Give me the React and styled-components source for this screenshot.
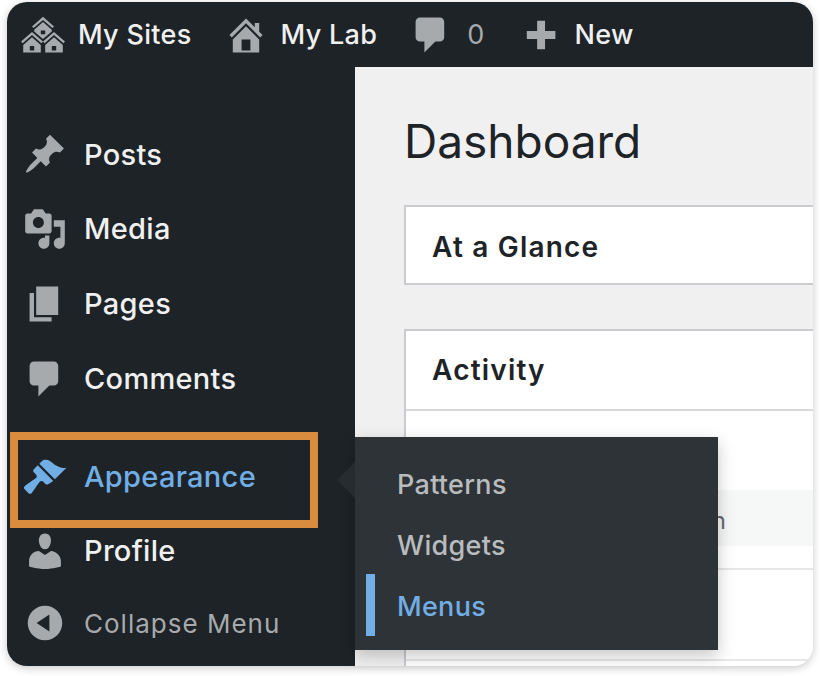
import React from 'react'
import styled, { createGlobalStyle } from 'styled-components'

const Global = createGlobalStyle`
  html, body { margin: 0; padding: 0; background: #fff; }
  body { font-family: Inter, "Liberation Sans", sans-serif; }
`

const Page = styled.div`
  width: 820px;
  height: 676px;
  padding: 2px 7px 10px 7px;
  box-sizing: border-box;
  overflow: hidden;
`

const Frame = styled.div`
  position: relative;
  width: 806px;
  height: 664px;
  border-radius: 20px;
  box-shadow: 0 2px 8px rgba(0, 0, 0, 0.22);
`

const Clip = styled.div`
  width: 100%;
  height: 100%;
  display: flex;
  flex-direction: column;
  border-radius: 20px;
  overflow: hidden;
  background: #f0f0f1;
`

const TopBar = styled.header`
  flex: none;
  height: 65px;
  display: flex;
  align-items: center;
  padding-left: 14px;
  background: #1d2327;
`

const TopItem = styled.div`
  display: flex;
  align-items: center;
  gap: ${(p) => p.$gap}px;
  margin-right: ${(p) => p.$after || 0}px;
  font-size: 27px;
  letter-spacing: 0.3px;
  font-weight: ${(p) => (p.$muted ? 400 : 500)};
  color: ${(p) => (p.$muted ? '#a7aaad' : '#f0f0f1')};
`

const Glyph = styled.svg`
  flex: none;
  display: block;
  width: 44px;
  height: 44px;
  fill: ${(p) => p.$color || '#a7aaad'};
`

const Body = styled.div`
  flex: 1;
  display: flex;
  min-height: 0;
`

const Sidebar = styled.nav`
  flex: none;
  width: 348px;
  padding-top: 50px;
  box-sizing: border-box;
  background: #1d2327;
`

const MenuItem = styled.div`
  position: relative;
  height: ${(p) => p.$height}px;
  margin-top: ${(p) => p.$top || 0}px;
  display: flex;
  align-items: center;
  gap: 17px;
  padding-left: 16px;
  font-size: 29px;
  font-weight: 500;
  letter-spacing: 0.3px;
  color: #f0f0f1;
`

const ActiveItem = styled(MenuItem)`
  color: #72aee6;
`

const CollapseItem = styled(MenuItem)`
  font-size: 26px;
  font-weight: 400;
  letter-spacing: 1px;
  color: #a7aaad;
`

const Highlight = styled.div`
  position: absolute;
  left: 3px;
  top: -8px;
  width: 308px;
  height: 96px;
  box-sizing: border-box;
  border: 8px solid #d98c3e;
`

const Content = styled.main`
  flex: 1;
  min-width: 0;
  padding: 45px 0 0 49px;
  overflow: hidden;
`

const Title = styled.h1`
  margin: 0 0 34px;
  font-size: 46px;
  line-height: 59px;
  font-weight: 400;
  color: #1d2327;
  white-space: nowrap;
`

const Card = styled.section`
  width: 500px;
  margin-bottom: ${(p) => p.$after || 0}px;
  background: #fff;
  border: 2px solid #c9cbce;
  box-sizing: border-box;
`

const CardHead = styled.h2`
  margin: 0;
  height: ${(p) => p.$height}px;
  padding: ${(p) => p.$nudge || 0}px 0 0 26px;
  box-sizing: border-box;
  display: flex;
  align-items: center;
  font-size: 28px;
  font-weight: 600;
  letter-spacing: 1.2px;
  color: #1d2327;
`

const CardBody = styled.div`
  border-top: 2px solid #d8d9db;
  padding-top: 79px;
  height: 260px;
`

const GrayRow = styled.div`
  height: 56px;
  box-sizing: border-box;
  display: flex;
  align-items: center;
  justify-content: flex-end;
  padding: 5px 176px 0 0;
  background: #f6f7f7;
  font-size: 24px;
  color: #646970;
  white-space: nowrap;
`

const Rule = styled.div`
  margin-top: ${(p) => p.$top}px;
  height: 2px;
  background: #e6e7e8;
`

const Flyout = styled.div`
  position: absolute;
  left: 348px;
  top: 435px;
  width: 363px;
  height: 213px;
  padding: 17px 0 0 42px;
  box-sizing: border-box;
  background: #2e3337;
  box-shadow: 0 6px 16px rgba(0, 0, 0, 0.22);

  &::before {
    content: '';
    position: absolute;
    left: -18px;
    top: 25px;
    border: 18px solid transparent;
    border-left: 0;
    border-right-color: #272c30;
  }
`

const FlyoutLink = styled.div`
  position: relative;
  height: 61px;
  display: flex;
  align-items: center;
  font-size: 27px;
  font-weight: 500;
  letter-spacing: 0.3px;
  color: ${(p) => (p.$active ? '#72aee6' : '#b9bcbf')};

  ${(p) =>
    p.$active &&
    `&::before {
      content: '';
      position: absolute;
      left: -31px;
      top: -2px;
      width: 9px;
      height: 62px;
      background: #72aee6;
    }`}
`

const icons = {
  multisite:
    'M14.27 6.87L10 3.14 5.73 6.87 5 6.14l5-4.38 5 4.38zM14 8.42l-4.05 3.43L6 8.38v-.74l4-3.5 4 3.5v.78zM11 9.7V8H9v1.7h2zm-1.73 4.03L5 10 .73 13.73 0 13l5-4.38L10 13zm10 0L15 10l-4.27 3.73L10 13l5-4.38L20 13zM5 11l4 3.5V18H1v-3.5zm10 0l4 3.5V18h-8v-3.5zM6 17v-2H4v2h2zm10 0v-2h-2v2h2z',
  home: 'M16 8.5l1.53 1.53-1.06 1.06L10 4.62l-6.47 6.47-1.06-1.06L10 2.5l4 4v-2h2v4zm-6-2.46l6 5.99V18H4v-5.97zM12 17v-5H8v5h4z',
  comment:
    'M5 2h9c1.1 0 2 .9 2 2v7c0 1.1-.9 2-2 2h-2l-5 5v-5H5c-1.1 0-2-.9-2-2V4c0-1.1.9-2 2-2z',
  plus: 'M17 8.2v3.6h-4.7v4.7H8.7v-4.7H4V8.2h4.7V3.5h3.6v4.7z',
  post: 'M10.44 3.02l1.82-1.82 6.36 6.35-1.83 1.82c-1.05-.68-2.48-.57-3.41.36l-.75.75c-.92.93-1.04 2.35-.35 3.41l-1.83 1.82-2.41-2.41-2.8 2.79c-.42.42-3.38 2.71-3.8 2.29s1.86-3.39 2.28-3.81l2.79-2.79L4.1 9.36l1.83-1.82c1.05.69 2.48.57 3.4-.36l.75-.75c.93-.92 1.05-2.35.36-3.41z',
  media:
    'M13 11V4c0-.55-.45-1-1-1h-1.67L9 1H5L3.67 3H2c-.55 0-1 .45-1 1v7c0 .55.45 1 1 1h10c.55 0 1-.45 1-1zM7 4.5c1.38 0 2.5 1.12 2.5 2.5S8.38 9.5 7 9.5 4.5 8.38 4.5 7 5.62 4.5 7 4.5zM14 6h5v10.5c0 1.38-1.12 2.5-2.5 2.5S14 17.88 14 16.5s1.12-2.5 2.5-2.5c.17 0 .34.02.5.05V9h-3V6zm-4 8.05V13h2v3.5c0 1.38-1.12 2.5-2.5 2.5S7 17.88 7 16.5 8.12 14 9.5 14c.17 0 .34.02.5.05z',
  page: 'M6 15V2h10v13H6zm-1 1h8v2H3V5h2v11z',
  appearance:
    'M14.48 11.06L7.41 3.99l1.5-1.5c.5-.56 2.3-.47 3.51.32 1.21.8 1.43 1.28 2.91 2.1 1.18.64 2.45 1.26 4.45.85zm-.71.71L6.7 4.7 4.93 6.47c-.39.39-.39 1.02 0 1.41l1.06 1.06c.39.39.39 1.03 0 1.42-.6.6-4.63 3.18-5.24 3.79-.39.39-.39 1.02 0 1.41l1.77 1.77c.39.39 1.02.39 1.41 0 .61-.61 3.19-4.64 3.79-5.24.39-.39 1.03-.39 1.42 0l1.06 1.06c.39.39 1.02.39 1.41 0z',
  users:
    'M10 9.25c-2.27 0-2.73-3.44-2.73-3.44C7 4.02 7.82 2 9.97 2c2.16 0 2.98 2.02 2.71 3.81 0 0-.41 3.44-2.68 3.44zm0 2.57L12.72 10c2.39 0 4.52 2.33 4.52 4.53v2.49s-3.65 1.13-7.24 1.13c-3.65 0-7.24-1.13-7.24-1.13v-2.49c0-2.25 1.94-4.48 4.47-4.48z',
  collapse:
    'M10 2.16c4.33 0 7.84 3.51 7.84 7.84s-3.51 7.84-7.84 7.84S2.16 14.33 2.16 10 5.71 2.16 10 2.16zm2 11.72V6.12L6.18 9.97z',
}

const Icon = ({ name, color }) => (
  <Glyph viewBox="0 0 20 20" $color={color}>
    <path d={icons[name]} fillRule="evenodd" />
  </Glyph>
)

const menu = [
  { label: 'Posts', icon: 'post', height: 74 },
  { label: 'Media', icon: 'media', height: 75 },
  { label: 'Pages', icon: 'page', height: 75 },
  { label: 'Comments', icon: 'comment', height: 75 },
]

const App = () => {
  return (
    <Page>
      <Global />
      <Frame>
        <Clip>
          <TopBar>
            <TopItem $gap={13} $after={32}>
              <Icon name="multisite" />
              My Sites
            </TopItem>
            <TopItem $gap={13} $after={32}>
              <Icon name="home" />
              My Lab
            </TopItem>
            <TopItem $gap={14} $after={33} $muted>
              <Icon name="comment" />0
            </TopItem>
            <TopItem $gap={13}>
              <Icon name="plus" />
              New
            </TopItem>
          </TopBar>
          <Body>
            <Sidebar>
              {menu.map((cur) => (
                <MenuItem key={cur.label} $height={cur.height}>
                  <Icon name={cur.icon} />
                  {cur.label}
                </MenuItem>
              ))}
              <ActiveItem $height={73} $top={24}>
                <Icon name="appearance" color="#72aee6" />
                Appearance
                <Highlight />
              </ActiveItem>
              <MenuItem $height={75}>
                <Icon name="users" />
                Profile
              </MenuItem>
              <CollapseItem $height={70}>
                <Icon name="collapse" />
                Collapse Menu
              </CollapseItem>
            </Sidebar>
            <Content>
              <Title>Dashboard</Title>
              <Card $after={44}>
                <CardHead $height={76} $nudge={3}>
                  At a Glance
                </CardHead>
              </Card>
              <Card>
                <CardHead $height={78}>Activity</CardHead>
                <CardBody>
                  <GrayRow>Recent Comments on</GrayRow>
                  <Rule $top={22} />
                  <Rule $top={89} />
                </CardBody>
              </Card>
            </Content>
          </Body>
        </Clip>
        <Flyout>
          <FlyoutLink>Patterns</FlyoutLink>
          <FlyoutLink>Widgets</FlyoutLink>
          <FlyoutLink $active>Menus</FlyoutLink>
        </Flyout>
      </Frame>
    </Page>
  )
}

export default App
